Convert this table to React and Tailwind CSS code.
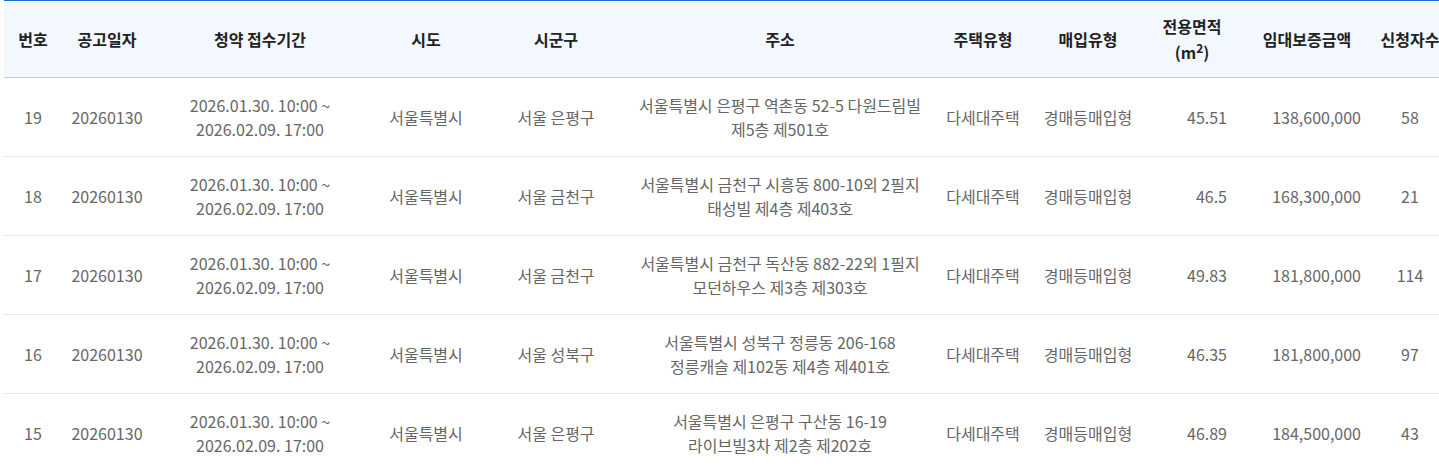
import React from "react";

const rows = [
  { no: 19, date: "20260130", sido: "서울특별시", gu: "서울 은평구", addr: ["서울특별시 은평구 역촌동 52-5 다원드림빌", "제5층 제501호"], area: "45.51", deposit: "138,600,000", count: 58 },
  { no: 18, date: "20260130", sido: "서울특별시", gu: "서울 금천구", addr: ["서울특별시 금천구 시흥동 800-10외 2필지", "태성빌 제4층 제403호"], area: "46.5", deposit: "168,300,000", count: 21 },
  { no: 17, date: "20260130", sido: "서울특별시", gu: "서울 금천구", addr: ["서울특별시 금천구 독산동 882-22외 1필지", "모던하우스 제3층 제303호"], area: "49.83", deposit: "181,800,000", count: 114 },
  { no: 16, date: "20260130", sido: "서울특별시", gu: "서울 성북구", addr: ["서울특별시 성북구 정릉동 206-168", "정릉캐슬 제102동 제4층 제401호"], area: "46.35", deposit: "181,800,000", count: 97 },
  { no: 15, date: "20260130", sido: "서울특별시", gu: "서울 은평구", addr: ["서울특별시 은평구 구산동 16-19", "라이브빌3차 제2층 제202호"], area: "46.89", deposit: "184,500,000", count: 43 },
];

const Th = ({ children, className = "" }) => (
  <th className={`font-bold text-base leading-[26px] text-[#222] text-center ${className}`}>{children}</th>
);

const Td = ({ children, className = "" }) => (
  <td className={`text-base leading-6 text-[#666] ${className}`}>{children}</td>
);

export default function App() {
  return (
    <div
      className="w-[1439px] h-[469px] overflow-hidden bg-white pl-1"
      style={{ fontFamily: '"Noto Sans CJK KR", "Noto Sans", sans-serif' }}
    >
      <table className="w-[1444px] table-fixed border-collapse">
        <colgroup>
          <col className="w-[58px]" />
          <col className="w-[90px]" />
          <col className="w-[216px]" />
          <col className="w-[116px]" />
          <col className="w-[144px]" />
          <col className="w-[304px]" />
          <col className="w-[102px]" />
          <col className="w-[108px]" />
          <col className="w-[100px]" />
          <col className="w-[130px]" />
          <col className="w-[76px]" />
        </colgroup>
        <thead>
          <tr className="h-[77px] bg-[#f3f8ff] border-t border-t-[#1a6fdc] border-b border-b-[#c8c8c8]">
            <Th>번호</Th>
            <Th>공고일자</Th>
            <Th>청약 접수기간</Th>
            <Th>시도</Th>
            <Th>시군구</Th>
            <Th>주소</Th>
            <Th>주택유형</Th>
            <Th>매입유형</Th>
            <Th>
              전용면적
              <br />
              (m<sup>2</sup>)
            </Th>
            <Th>임대보증금액</Th>
            <Th className="whitespace-nowrap">신청자수</Th>
          </tr>
        </thead>
        <tbody>
          {rows.map((r) => (
            <tr key={r.no} className="h-[79px] border-b border-[#e8e8e8]">
              <Td className="text-center">{r.no}</Td>
              <Td className="text-center">{r.date}</Td>
              <Td className="text-center">
                2026.01.30. 10:00 ~
                <br />
                2026.02.09. 17:00
              </Td>
              <Td className="text-center">{r.sido}</Td>
              <Td className="text-center">{r.gu}</Td>
              <Td className="text-center text-[#333]">
                {r.addr[0]}
                <br />
                {r.addr[1]}
              </Td>
              <Td className="text-center">다세대주택</Td>
              <Td className="text-center">경매등매입형</Td>
              <Td className="text-right pr-[15px]">{r.area}</Td>
              <Td className="text-right pr-[11px]">{r.deposit}</Td>
              <Td className="text-center">{r.count}</Td>
            </tr>
          ))}
        </tbody>
      </table>
    </div>
  );
}
